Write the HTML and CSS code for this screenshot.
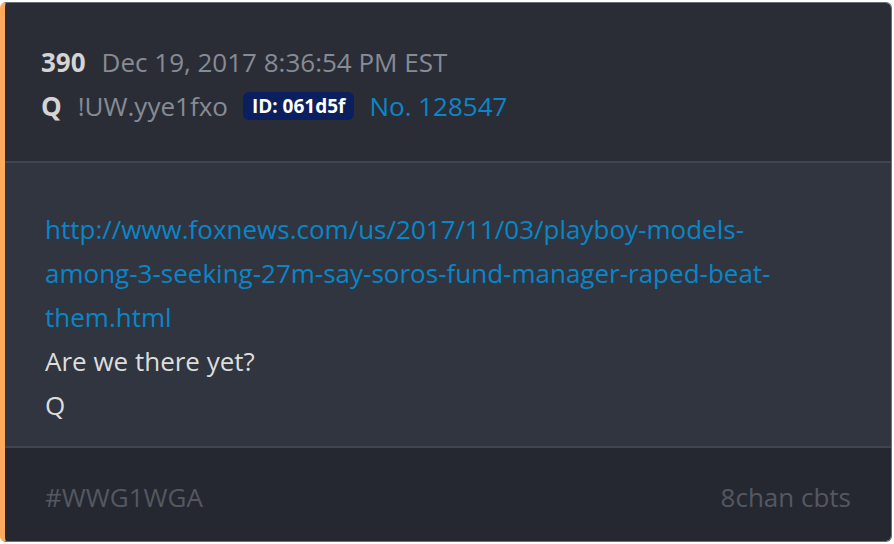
FILE: index.html
```html
<!DOCTYPE html>
<html lang="en">
<head>
    <meta charset="UTF-8">
    <meta name="viewport" content="width=device-width, initial-scale=1.0">
    <title>Post 390</title>
    <link rel="stylesheet" href="styles.css">
</head>
<body>
    <div class="post">
        <div class="post-header">
            <div class="meta-line">
                <span class="post-num">390</span>
                <span class="post-date">Dec 19, 2017 8:36:54 PM EST</span>
            </div>
            <div class="meta-line">
                <span class="author">Q</span>
                <span class="trip">!UW.yye1fxo</span>
                <span class="user-id">ID: 061d5f</span>
                <a class="post-no" href="#">No. 128547</a>
            </div>
        </div>
        <div class="post-body">
            <a class="link" href="#">http://www.foxnews.com/us/2017/11/03/playboy-models-among-3-seeking-27m-say-soros-fund-manager-raped-beat-them.html</a>
            <p>Are we there yet?</p>
            <p>Q</p>
        </div>
        <div class="post-footer">
            <span class="tag">#WWG1WGA</span>
            <span class="source">8chan cbts</span>
        </div>
    </div>
</body>
</html>
```

FILE: styles.css
```css
body {
    font-family: "Open Sans", sans-serif;
    margin: 0;
    padding: 2px 2px 2px 0;
    background-color: #ffffff;
}
.post {
    border: 1px solid #6a6e77;
    border-left: 5px solid #ffa95c;
    border-radius: 6px;
    overflow: hidden;
    height: 540px;
    box-sizing: border-box;
    display: flex;
    flex-direction: column;
}
.post-header {
    background-color: #2a2d36;
    padding: 37px 36px 0 36px;
    height: 160px;
    box-sizing: border-box;
    border-bottom: 2px solid #41454e;
}
.meta-line {
    display: flex;
    align-items: center;
    height: 44px;
    font-size: 26px;
}
.post-num,
.author {
    font-weight: bold;
    color: #d4d4d4;
    margin-right: 16px;
}
.post-date {
    color: #878b95;
    margin-right: 16px;
}
.trip {
    color: #878b95;
    margin-right: 15px;
}
.user-id {
    background-color: #0b1f5e;
    color: #ffffff;
    font-weight: bold;
    font-size: 19px;
    padding: 0 9px;
    line-height: 28px;
    border-radius: 6px;
    margin-right: 15px;
}
.post-no {
    color: #0a86c8;
    text-decoration: none;
}
.post-body {
    background-color: #303540;
    padding: 44px 60px 0 40px;
    flex: 1;
    font-size: 26px;
    line-height: 44px;
    color: #dddddd;
    border-bottom: 2px solid #41454e;
}
.post-body p {
    margin: 0;
}
.link {
    color: #0a86c8;
    text-decoration: none;
    display: block;
}
.post-footer {
    background-color: #252830;
    height: 93px;
    flex-shrink: 0;
    padding: 4px 40px 0 40px;
    box-sizing: border-box;
    display: flex;
    justify-content: space-between;
    align-items: center;
    font-size: 26px;
    color: #545862;
}
```
